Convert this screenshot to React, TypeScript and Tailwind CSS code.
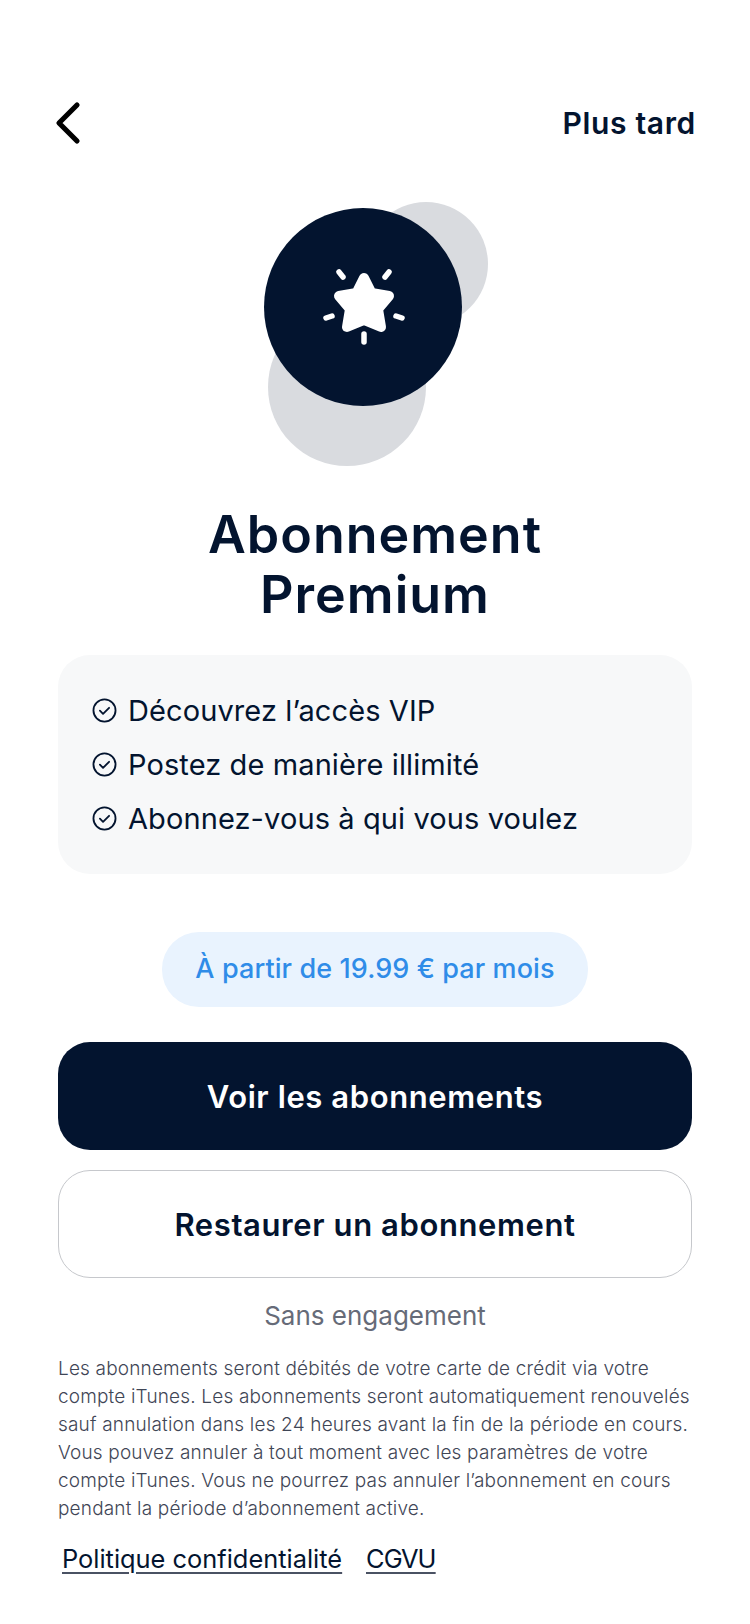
const features = [
  "Découvrez l’accès VIP",
  "Postez de manière illimité",
  "Abonnez-vous à qui vous voulez",
];

function BackIcon() {
  return (
    <svg viewBox="0 0 30 44" className="-ml-[4px] h-[44px] w-[30px]" fill="none" stroke="#000" strokeWidth="5.2" strokeLinecap="round" strokeLinejoin="round">
      <path d="M23 4L5 22L23 40" />
    </svg>
  );
}

function CheckCircle() {
  return (
    <svg viewBox="0 0 24 24" className="h-[25px] w-[25px] shrink-0" fill="none" stroke="#03142f" strokeWidth="1.75" strokeLinecap="round" strokeLinejoin="round">
      <circle cx="12" cy="12" r="10.6" />
      <path d="M7.6 12.2l3 3 5.8-5.8" />
    </svg>
  );
}

function StarIcon() {
  return (
    <svg viewBox="0 0 130 120" className="mb-[14px] ml-[4px] h-[120px] w-[130px]" fill="none">
      <path
        d="M64 38L71.5 53L89 56L78 69L81 87L64 80L47 87L50 69L39 56L56.5 53Z"
        fill="#fff"
        stroke="#fff"
        strokeWidth="10"
        strokeLinejoin="round"
      />
      <g stroke="#fff" strokeWidth="5.5" strokeLinecap="round">
        <path d="M39 32L43 37" />
        <path d="M89 32L85 37" />
        <path d="M26 78L32 76" />
        <path d="M102 78L96 76" />
        <path d="M64 94V102" />
      </g>
    </svg>
  );
}

export default function App() {
  return (
    <div className="flex min-h-[1624px] w-[750px] flex-col bg-white px-[58px] pt-[97px] font-['Inter',sans-serif] text-[#03142f]">
      <header className="flex h-[52px] items-center justify-between">
        <BackIcon />
        <span className="-mr-[4px] text-[30px] font-semibold tracking-[0.65px]">Plus tard</span>
      </header>

      <div className="relative mx-auto mt-[53px] h-[264px] w-[220px] translate-x-[3px]">
        <div className="absolute left-[96px] top-0 h-[124px] w-[124px] rounded-full bg-[#d9dbdf]" />
        <div className="absolute left-0 top-[106px] h-[158px] w-[158px] rounded-full bg-[#d9dbdf]" />
        <div className="absolute left-[-4px] top-[6px] flex h-[198px] w-[198px] items-center justify-center rounded-full bg-[#03142f]">
          <StarIcon />
        </div>
      </div>

      <h1 className="mt-[39px] text-center text-[52px] font-semibold leading-[60px] tracking-[1px]">
        Abonnement
        <br />
        Premium
      </h1>

      <ul className="mt-[30px] flex h-[219px] flex-col justify-center gap-[14px] rounded-[32px] bg-[#f7f8f9] px-[34px]">
        {features.map((f) => (
          <li key={f} className="flex h-[40px] items-center gap-[11px] text-[29px] tracking-[0.1px]">
            <CheckCircle />
            {f}
          </li>
        ))}
      </ul>

      <div className="mx-auto mt-[58px] flex h-[75px] w-[426px] items-center justify-center rounded-[37px] bg-[#e9f3fe] text-[27px] font-medium tracking-[0.1px] text-[#2f8ce8]">
        À partir de 19.99 € par mois
      </div>

      <button className="mt-[35px] h-[108px] rounded-[32px] bg-[#03142f] pt-[2px] text-[31px] font-semibold tracking-[0.6px] text-white">
        Voir les abonnements
      </button>
      <button className="mt-[20px] h-[108px] rounded-[32px] border border-[#c6c8cc] bg-white pt-[2px] text-[31px] font-semibold tracking-[0.6px]">
        Restaurer un abonnement
      </button>

      <p className="mt-[20px] text-center text-[26px] leading-[36px] text-[#666b78]">Sans engagement</p>

      <div className="mt-[21px] whitespace-nowrap text-[19px] font-light leading-[28px] tracking-[0.17px] text-[#3f4656]">
        <p>Les abonnements seront débités de votre carte de crédit via votre</p>
        <p>compte iTunes. Les abonnements seront automatiquement renouvelés</p>
        <p>sauf annulation dans les 24 heures avant la fin de la période en cours.</p>
        <p>Vous pouvez annuler à tout moment avec les paramètres de votre</p>
        <p>compte iTunes. Vous ne pourrez pas annuler l’abonnement en cours</p>
        <p>pendant la période d’abonnement active.</p>
      </div>

      <div className="mt-[18px] flex gap-[24px] pl-[4px] text-[25.4px] leading-[36px] underline underline-offset-[4px] decoration-[#4a5263]">
        <a>Politique confidentialité</a>
        <a className="tracking-[-1px]">CGVU</a>
      </div>
    </div>
  );
}
